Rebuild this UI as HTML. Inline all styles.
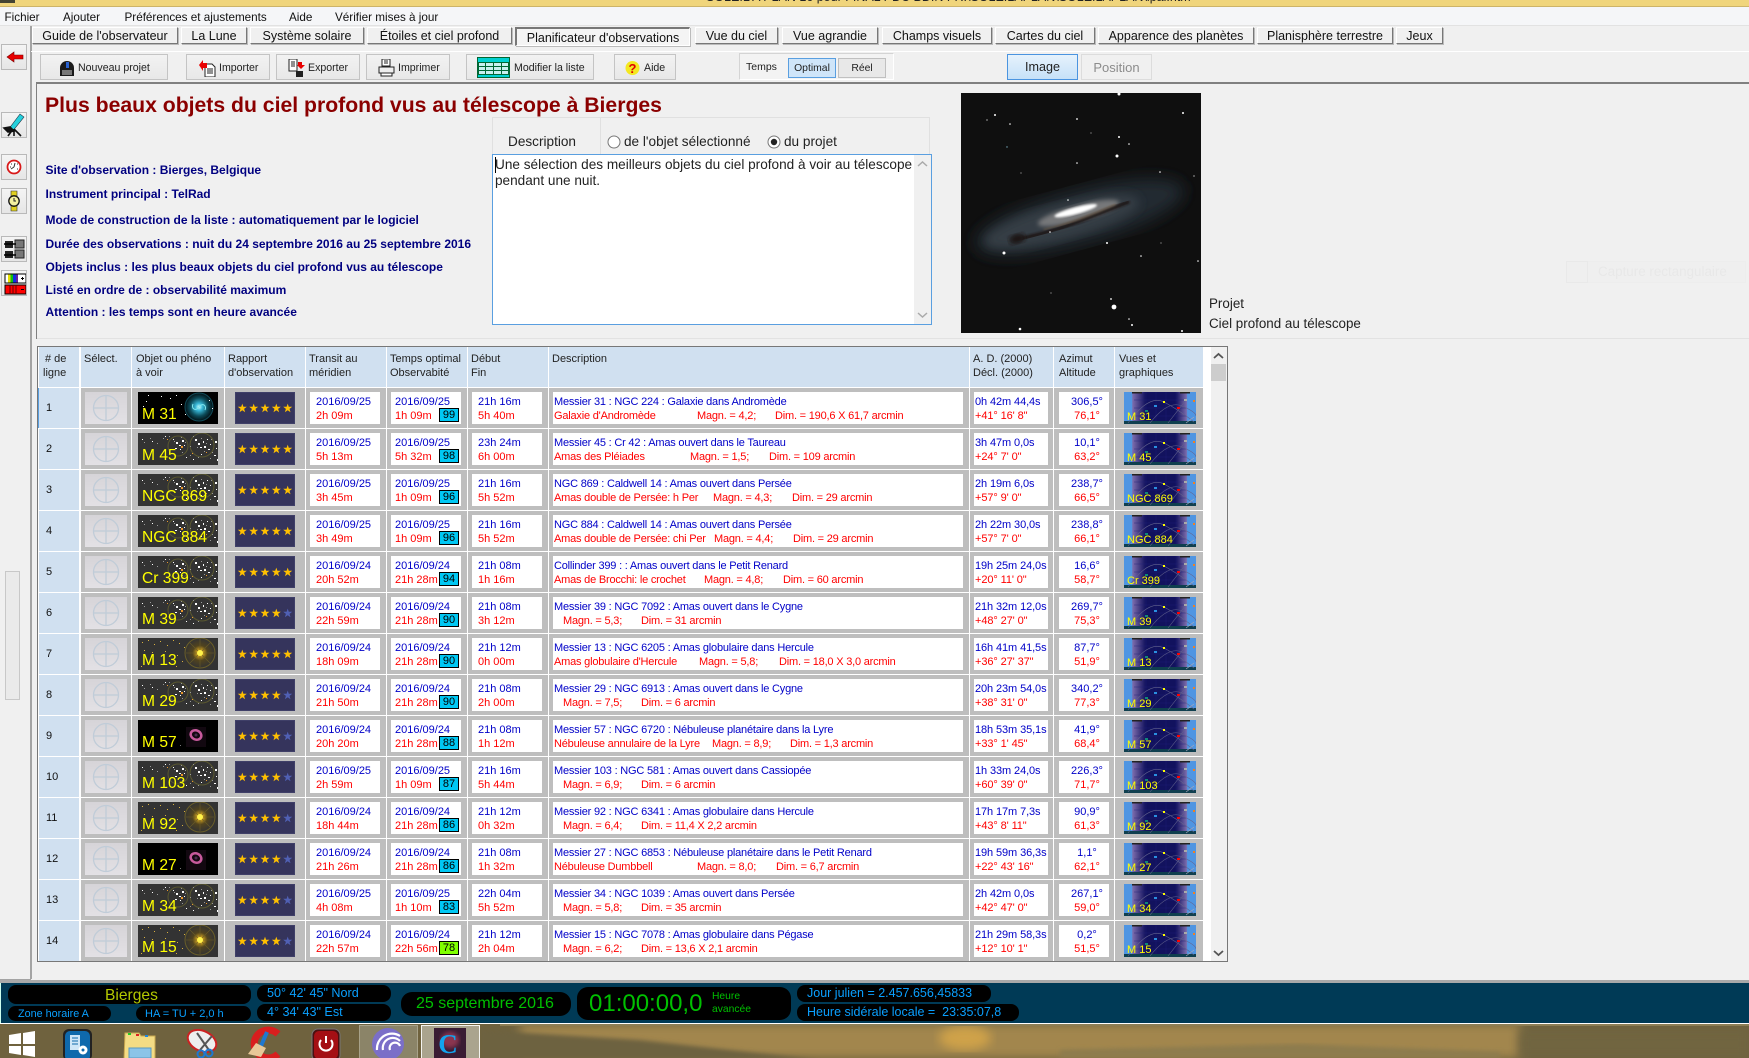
<!DOCTYPE html>
<html lang="fr"><head><meta charset="utf-8"><title>Planificateur d'observations</title>
<style>
*{box-sizing:border-box;margin:0;padding:0}
html,body{width:1749px;height:1058px;overflow:hidden;background:#f0f0f0;font-family:"Liberation Sans",sans-serif;font-size:11px;color:#111}
.a{position:absolute;white-space:nowrap}
.tab{position:absolute;top:27px;height:17px;background:#f0f0f0;border:1px solid;border-color:#fff #777 #777 #fff;font-size:12.5px;line-height:17px;text-align:center;box-shadow:1px 1px 0 #bbb}
.tab.on{height:19px;line-height:18px;border-color:#777 #fff #fff #777;border-width:2px 1px 1px 2px;background:#f4f4f4}
.btn{position:absolute;top:54px;height:26px;background:linear-gradient(#f2f2f2,#e8e8e8);border:1px solid #c4c4c4;font-size:10.6px;line-height:26px;color:#222}
.btn span{position:absolute;white-space:nowrap}
.btn svg{position:absolute}
.sb{position:absolute;left:1px;width:26px;height:26px;background:linear-gradient(#f4f4f4,#e6e6e6);border:1px solid #b9b9b9}
.inf{position:absolute;left:45.5px;font-weight:bold;font-size:12px;line-height:16px;color:#000080;white-space:nowrap}
.hd{position:absolute;top:347px;height:40px;background:#d0e0f0;padding-top:5px;line-height:14px;font-size:11px;color:#222;white-space:pre}
.r{position:absolute;left:0;width:1203px;height:40px;background:linear-gradient(90deg,transparent 0 39px,#d0e0f0 39px 79px,#fff 79px 81px,#bebebe 81px 131px,#fff 131px 132px,#bebebe 132px 224px,#fff 224px 225px,#bebebe 225px 305px,#fff 305px 306px,#bebebe 306px 386px,#fff 386px 387px,#bebebe 387px 467px,#fff 467px 468px,#bebebe 468px 548px,#fff 548px 549px,#bebebe 549px 969px,#fff 969px 970px,#bebebe 970px 1053px,#fff 1053px 1054px,#bebebe 1054px 1114px,#fff 1114px 1115px,#bebebe 1115px 1203px)}
.r>svg{position:absolute;top:4px}
.n{position:absolute;left:46px;top:13px;line-height:14px;color:#111}
.w{position:absolute;top:4px;height:32px;background:#fff;padding-top:3px;line-height:14px;white-space:nowrap}
.w b,.w i{display:block;font-weight:normal;font-style:normal;height:14px}
.w b{color:#0000c8}.w i{color:#f00}
.t5{left:310px;width:70px;padding-left:6px}
.t6{left:391px;width:70px;padding-left:4px}
.t7{left:472px;width:70px;padding-left:6px}
.d{left:553px;width:410px;padding-left:1px;letter-spacing:-.2px}
.ra{left:974px;width:74px;padding-left:1px;letter-spacing:-.1px}
.az{left:1059px;width:50px;padding-left:6px;text-align:center}
.m{position:absolute;top:17px;color:#f00}
.s{position:absolute;left:48px;top:16px;width:20px;height:14px;background:#00c8f4;border:1px solid #000;font-style:normal;color:#000;text-align:center;line-height:12px}
.l1{position:absolute;left:142px;top:18px;font-size:15.6px;line-height:18px;color:#ff0;white-space:nowrap}
.l2{position:absolute;left:1127px;top:22px;font-size:11px;line-height:14px;color:#ff0;white-space:nowrap}
.p{position:absolute;background:#000;border-radius:8px}
.bl{color:#0aa0ff;position:absolute;white-space:nowrap}
.gr{color:#00c000;position:absolute;white-space:nowrap}
</style></head><body>
<svg width="0" height="0" style="position:absolute">
<defs>
<radialGradient id="gm"><stop offset="0" stop-color="#cff"/><stop offset=".25" stop-color="#38b8d8"/><stop offset=".65" stop-color="#0c4a58"/><stop offset="1" stop-color="#021014"/></radialGradient>
<radialGradient id="gy"><stop offset="0" stop-color="#ffe838"/><stop offset=".2" stop-color="#c89c20"/><stop offset=".5" stop-color="#52441e"/><stop offset="1" stop-color="#333"/></radialGradient>
<linearGradient id="gv" x1="0" x2="1"><stop offset="0" stop-color="#4f95e2"/><stop offset=".11" stop-color="#4f95e2"/><stop offset=".12" stop-color="#7c6cac"/><stop offset=".3" stop-color="#12125e"/><stop offset=".72" stop-color="#12125e"/><stop offset=".87" stop-color="#7c6cac"/><stop offset=".88" stop-color="#4f95e2"/><stop offset="1" stop-color="#4f95e2"/></linearGradient>
<linearGradient id="gs" x1="0" y1="0" x2="0" y2="1"><stop offset="0" stop-color="#d6d4d8"/><stop offset="1" stop-color="#e3e1e5"/></linearGradient>
<filter id="b2"><feGaussianBlur stdDeviation="2"/></filter>
<filter id="b4"><feGaussianBlur stdDeviation="5"/></filter>
<filter id="b8"><feGaussianBlur stdDeviation="8"/></filter>
<filter id="b1"><feGaussianBlur stdDeviation="1"/></filter>
</defs>
<symbol id="sel" viewBox="0 0 42 32"><rect width="42" height="32" fill="url(#gs)"/><g fill="none" stroke="#c0ccd8" stroke-width="1.3"><circle cx="21" cy="16" r="12.5"/><path d="M21 3.500V28.500M8.500 16H33.500"/></g></symbol>
<symbol id="o" viewBox="0 0 80 32"><rect width="80" height="32" fill="#333"/><g fill="none" stroke="#5a5830"><circle cx="40" cy="13" r="10"/><circle cx="64" cy="12" r="12"/></g>
<path fill="#999" d="M6 9h1v1H6zM12 5h1v1h-1zM19 10h1v1h-1zM25 5h1v1h-1zM31 3h1v1h-1zM36 8h1v1h-1zM43 4h1v1h-1zM47 9h1v1h-1zM52 13h1v1h-1zM55 3h1v1h-1zM59 14h1v1h-1zM63 5h1v1h-1zM68 10h1v1h-1zM73 6h1v1h-1zM74 19h1v1h-1zM60 24h1v1h-1zM52 22h1v1h-1zM44 19h1v1h-1zM66 18h1v1h-1zM72 25h1v1h-1z"/>
<path fill="#fff" d="M4 6h1v1H4zM14 8h1v1h-1zM27 3h1v1h-1zM38 9h2v2h-2zM41 12h2v1h-2zM44 7h2v2h-2zM46 12h1v1h-1zM37 15h2v1h-2zM42 16h1v1h-1zM35 6h1v1h-1zM57 6h2v2h-2zM60 10h2v2h-2zM62 14h2v1h-2zM65 8h1v2h-1zM66 13h2v2h-2zM69 6h1v1h-1zM70 16h2v1h-2zM72 11h1v1h-1zM77 8h2v2h-2zM78 15h1v1h-1zM76 22h2v1h-2zM79 26h1v2h-1zM63 21h1v1h-1zM55 26h1v1h-1zM48 24h1v1h-1z"/>
<path fill="#e8962c" d="M43 13h2v2h-2zM54 20h1v1h-1zM29 6h1v1h-1zM68 19h1v1h-1z"/></symbol>
<symbol id="g" viewBox="0 0 80 32"><rect width="80" height="32" fill="#333"/><circle cx="62" cy="15" r="15" fill="url(#gy)"/><circle cx="62" cy="15" r="15" fill="none" stroke="#6a5e28"/><g stroke="#6a5c28" stroke-width=".6"><path d="M48 15h28M62 1v28M52 5l20 20M72 5L52 25"/></g><circle cx="62" cy="15" r="3" fill="#fff24a"/>
<path fill="#d8b040" d="M4 4h1v1H4zM10 2h1v1h-1zM16 6h1v1h-1zM22 3h1v1h-1zM29 7h1v1h-1zM35 2h1v1h-1zM41 5h1v1h-1zM6 12h1v1H6zM14 14h1v1h-1zM27 13h1v1h-1zM39 17h1v1h-1zM44 23h1v1h-1zM38 28h1v1h-1zM3 28h1v1H3zM46 9h1v1h-1z"/></symbol>
<symbol id="b" viewBox="0 0 80 32"><rect width="80" height="32" fill="#000"/><circle cx="61" cy="15" r="14" fill="url(#gm)"/><circle cx="61" cy="15" r="14" fill="none" stroke="#114a58"/><path d="M61 15c4-5 8-1 6 3M61 15c-4 5-8 1-6-3" fill="none" stroke="#7fe8f0"/><path fill="#fff" d="M10 3h1v1h-1zM23 4h1v1h-1zM32 6h1v1h-1zM5 14h1v1H5zM8 9h1v1H8zM47 22h1v1h-1zM43 12h1v1h-1zM38 3h1v1h-1zM74 16h1v1h-1zM71 8h1v1h-1z"/></symbol>
<symbol id="nb" viewBox="0 0 80 32"><rect width="80" height="32" fill="#000"/><rect x="48" y="7" width="20" height="20" fill="#120810"/><ellipse cx="58" cy="15" rx="5.500" ry="4.500" fill="none" stroke="#c75a9c" stroke-width="2.500" transform="rotate(25 58 15)"/><circle cx="58" cy="15" r="1.500" fill="#4a2a50"/><path fill="#777" d="M42 25h1v1h-1z"/></symbol>
<symbol id="st" viewBox="-5 -5 10 10"><polygon points="0,-4.700 1.100,-1.500 4.500,-1.500 1.800,.6 2.800,3.900 0,1.900 -2.800,3.900 -1.800,.6 -4.500,-1.500 -1.100,-1.500"/></symbol>
<symbol id="s5" viewBox="0 0 60 32"><rect width="60" height="32" fill="#35345c"/><rect x=".5" y=".5" width="59" height="31" fill="none" stroke="#3f3f68"/><g fill="#ffc000"><use href="#st" x="2.300" y="11.300" width="10" height="10"/><use href="#st" x="13.700" y="11.300" width="10" height="10"/><use href="#st" x="25" y="11.300" width="10" height="10"/><use href="#st" x="36.300" y="11.300" width="10" height="10"/><use href="#st" x="47.700" y="11.300" width="10" height="10"/></g></symbol>
<symbol id="s4" viewBox="0 0 60 32"><rect width="60" height="32" fill="#35345c"/><rect x=".5" y=".5" width="59" height="31" fill="none" stroke="#3f3f68"/><g fill="#ffc000"><use href="#st" x="2.300" y="11.300" width="10" height="10"/><use href="#st" x="13.700" y="11.300" width="10" height="10"/><use href="#st" x="25" y="11.300" width="10" height="10"/><use href="#st" x="36.300" y="11.300" width="10" height="10"/></g><use href="#st" x="47.700" y="11.300" width="10" height="10" fill="#5060b4"/></symbol>
<symbol id="v" viewBox="0 0 72 32"><rect width="72" height="32" fill="url(#gv)"/><path d="M8 0h10v1.500H8zM56 0h10v1.500H56z" fill="#222"/><rect y="29" width="72" height="3" fill="#0f3f4f"/><path stroke="#22227a" stroke-width=".4" d="M22 0v29M32 0v29M42 0v29M52 0v29M10 8h52M10 16h52M10 24h52"/><g fill="none" stroke="#62628c" stroke-width=".6"><path d="M4 31Q25 2 40 10T70 30"/><path d="M26 31Q44 8 58 14T72 24"/><path d="M44 31L62 8"/><path d="M62 31l8-6" stroke="#aab"/></g><rect x="39" y="9" width="2" height="2" fill="#ff0"/><rect x="53" y="15" width="3" height="2" fill="#f00"/><rect x="60" y="7" width="3" height="2" fill="#aaa"/><rect x="69" y="8" width="2" height="2" fill="#f08020"/><rect x="30" y="13" width="3" height="2" fill="#2a90e0"/><rect x="21" y="18" width="3" height="2" fill="#108878"/></symbol>
</svg>

<!-- title bar -->
<div class="a" style="left:0;top:0;width:1749px;height:7px;background:#f0d57c;border-bottom:1px solid #cdb469;overflow:hidden"><div class="a" style="left:0;top:0;width:15px;height:3px;background:#443"></div><div class="a" style="left:706px;top:-10px;font-size:12.5px;color:#222;line-height:14px">SOLEIL A PLAN 16 pour FINAL PDC BDIN FR:\SOLEILAPLAN\SOLEILAPLAN\ipal.htm</div></div>
<!-- menu -->
<div class="a" style="left:0;top:7px;width:1749px;height:19px;background:#f5f6f8;border-bottom:1px solid #e2e2e2;font-size:11.700px;line-height:21px;color:#111"><span class="a" style="left:4.500px">Fichier</span><span class="a" style="left:63px">Ajouter</span><span class="a" style="left:124.500px">Préférences et ajustements</span><span class="a" style="left:289px">Aide</span><span class="a" style="left:335px">Vérifier mises à jour</span></div>
<div class="a" style="left:30px;top:26px;width:1.500px;height:953px;background:#a4a4a4"></div>
<div class="a" style="left:0;top:979px;width:31px;height:1px;background:#a4a4a4"></div>
<div class="a" style="left:31px;top:51px;width:1718px;height:1px;background:#fff"></div>
<!-- tabs -->
<div class="tab" style="left:32px;width:146px">Guide de l'observateur</div>
<div class="tab" style="left:181px;width:66px">La Lune</div>
<div class="tab" style="left:250px;width:114px">Système solaire</div>
<div class="tab" style="left:367px;width:145px">Étoiles et ciel profond</div>
<div class="tab on" style="left:515px;width:175px">Planificateur d'observations</div>
<div class="tab" style="left:695px;width:83px">Vue du ciel</div>
<div class="tab" style="left:782px;width:96px">Vue agrandie</div>
<div class="tab" style="left:882px;width:110px">Champs visuels</div>
<div class="tab" style="left:995px;width:100px">Cartes du ciel</div>
<div class="tab" style="left:1098px;width:156px">Apparence des planètes</div>
<div class="tab" style="left:1257px;width:136px">Planisphère terrestre</div>
<div class="tab" style="left:1396px;width:47px">Jeux</div>
<!-- toolbar -->
<div class="btn" style="left:40px;width:128px"><svg style="left:17px;top:5px" width="18" height="16" viewBox="0 0 18 16"><path d="M2 16V8a7 7 0 0 1 14 0v8z" fill="#1a1a1a"/><path d="M8 2h3v6H8z" fill="#2a62d0"/><rect x="4" y="10" width="10" height="5" fill="#777"/></svg><span style="left:37px">Nouveau projet</span></div>
<div class="btn" style="left:186px;width:84px"><svg style="left:12px;top:5px" width="17" height="17" viewBox="0 0 17 17"><path d="M6 4h7l3 3v10H6z" fill="#fff" stroke="#222"/><path d="M8 9h6M8 11h6M8 13h6" stroke="#222"/><path d="M0 5l4-5v3h4v5H4v3z" fill="#e80000"/></svg><span style="left:32px">Importer</span></div>
<div class="btn" style="left:276px;width:84px"><svg style="left:11px;top:4px" width="18" height="18" viewBox="0 0 18 18"><path d="M1 0h8v12H1z" fill="#fff" stroke="#222"/><path d="M3 3h4M3 5h4M3 7h4" stroke="#222"/><rect x="8" y="12" width="7" height="6" fill="#222"/><path d="M10 3h4v3h3l-4 4-4-4h1z" fill="#e80000"/></svg><span style="left:31px">Exporter</span></div>
<div class="btn" style="left:366px;width:84px"><svg style="left:11px;top:4px" width="17" height="18" viewBox="0 0 17 18"><path d="M4 0h8v7H4z" fill="#fff" stroke="#222"/><path d="M6 2h4M6 4h4" stroke="#222"/><path d="M1 8h15v6H1z" fill="#eee" stroke="#222"/><path d="M3 14h11v3H3z" fill="#fff" stroke="#222"/></svg><span style="left:31px">Imprimer</span></div>
<div class="btn" style="left:466px;width:128px"><svg style="left:10px;top:2px" width="33" height="21" viewBox="0 0 33 21"><rect width="33" height="21" fill="#063"/><rect x="1" y="1" width="31" height="4" fill="#00d0d0"/><g fill="#c8f0f0"><path d="M2 6h6v3H2zM9 6h7v3H9zM17 6h7v3h-7zM25 6h6v3h-6zM2 10h6v3H2zM9 10h7v3H9zM17 10h7v3h-7zM25 10h6v3h-6zM2 14h6v3H2zM9 14h7v3H9zM17 14h7v3h-7zM25 14h6v3h-6z"/></g><rect x="1" y="18" width="31" height="2" fill="#00d0d0"/></svg><span style="left:47px">Modifier la liste</span></div>
<div class="btn" style="left:614px;width:62px"><svg style="left:10px;top:5px" width="15" height="16" viewBox="0 0 15 16"><circle cx="7.500" cy="8" r="7" fill="#f4e820"/><text x="7.500" y="13" text-anchor="middle" font-family="Liberation Sans" font-weight="bold" font-size="13" fill="#e00000">?</text></svg><span style="left:29px">Aide</span></div>
<div class="a" style="left:739px;top:53px;width:155px;height:27px;border:1px solid;border-color:#d4d4d4 #fff #fff #d4d4d4;background:#f3f3f3"></div>
<div class="a" style="left:746px;top:59px;font-size:10.500px;line-height:16px;color:#222">Temps</div>
<div class="a" style="left:788px;top:58px;width:48px;height:20px;background:#cfe5f9;border:1px solid #5a9fe0;font-size:10.400px;line-height:20px;text-align:center;color:#222">Optimal</div>
<div class="a" style="left:838px;top:58px;width:48px;height:20px;background:#e8e8e8;border:1px solid #c0c0c0;font-size:10.400px;line-height:20px;text-align:center;color:#222">Réel</div>
<div class="a" style="left:1007px;top:54px;width:71px;height:26px;background:linear-gradient(#e6f2fc,#c6e1f8);border:1px solid #4a94e0;font-size:12.600px;line-height:25px;text-align:center;color:#222">Image</div>
<div class="a" style="left:1081px;top:54px;width:71px;height:26px;background:#f0f0f0;border:1px solid #dcdcdc;font-size:13px;line-height:25px;text-align:center;color:#8c8c8c">Position</div>
<div class="a" style="left:36px;top:82px;width:1713px;height:2px;background:#808080"></div>
<div class="a" style="left:35.500px;top:83px;width:1.500px;height:256px;background:#808080"></div>
<div class="a" style="left:37px;top:338px;width:1712px;height:1px;background:#e2e2e2"></div>
<!-- sidebar -->
<div class="sb" style="top:44px"><svg width="24" height="24" viewBox="0 0 24 24"><path d="M5 12l7-5v3h9v4h-9v3z" fill="#e80000" stroke="#700" stroke-width=".6"/></svg></div>
<div class="sb" style="top:112px"><svg width="24" height="24" viewBox="0 0 24 24"><path d="M6 17L18 1l4 3-12 15z" fill="#25d0dc" stroke="#234" stroke-width=".6"/><path d="M2 15l6-1 4 4-6 1zM11 16l-5 7M12 16l0 7M12 16l7 7" stroke="#111" stroke-width="1.600" fill="#111"/></svg></div>
<div class="sb" style="top:154px"><svg width="24" height="24" viewBox="0 0 24 24"><circle cx="12" cy="12" r="6.500" fill="#fff" stroke="#d81818" stroke-width="1.800"/><path d="M12 12l-3 2M12 12l1-4M9 9h1M15 9h1M8 12h1M15 14h1" stroke="#333"/></svg></div>
<div class="sb" style="top:188px"><svg width="24" height="24" viewBox="0 0 24 24"><path d="M9 2h6v5H9zM9 16h6v6H9z" fill="#e0d020" stroke="#333" stroke-width=".6"/><circle cx="12" cy="12" r="5.200" fill="#f4f0a0" stroke="#111" stroke-width="1.300"/><path d="M12 9v3h2" stroke="#222" fill="none"/></svg></div>
<div class="sb" style="top:236px"><svg width="24" height="24" viewBox="0 0 24 24"><path d="M3 4h8v7H3zM3 14h8v7H3z" fill="#222"/><path d="M13 3h9v8h-9zM13 13h9v8h-9z" fill="#777" stroke="#222"/><path d="M2 7h12M2 18h12" stroke="#000" stroke-width="1.400"/></svg></div>
<div class="sb" style="top:270px"><svg width="24" height="24" viewBox="0 0 24 24"><rect x="3" y="3" width="21" height="9" fill="#fff" stroke="#000"/><path d="M6 3.500h2.500v8H6z" fill="#e8e000"/><path d="M8.500 3.500H11v8H8.500z" fill="#10c010"/><path d="M11 3.500h3v8h-3z" fill="#1030e0"/><path d="M14 3.500h2v8h-2z" fill="#6020a0"/><path d="M19 7.500h3M20.500 6v3" stroke="#000"/><rect x="3" y="14" width="21" height="9" fill="#f00" stroke="#000"/><path d="M8 14v9M11 14v9M14 14v9" stroke="#600"/><path d="M19 18.500h3" stroke="#000"/></svg></div>
<div class="a" style="left:5px;top:571px;width:15px;height:129px;background:#eaeaea;border:1px solid #c8c8c8"></div>
<!-- heading -->
<div class="a" style="left:45px;top:93px;font-size:21.200px;line-height:26px;font-weight:bold;color:#8b0000">Plus beaux objets du ciel profond vus au télescope à Bierges</div>
<div class="inf" style="top:162px">Site d'observation : Bierges, Belgique</div>
<div class="inf" style="top:186px">Instrument principal : TelRad</div>
<div class="inf" style="top:212px">Mode de construction de la liste : automatiquement par le logiciel</div>
<div class="inf" style="top:236px">Durée des observations : nuit du 24 septembre 2016 au 25 septembre 2016</div>
<div class="inf" style="top:259px">Objets inclus : les plus beaux objets du ciel profond vus au télescope</div>
<div class="inf" style="top:282px">Listé en ordre de : observabilité maximum</div>
<div class="inf" style="top:304px">Attention : les temps sont en heure avancée</div>
<!-- description -->
<div class="a" style="left:492px;top:117px;width:438px;height:38px;border:1px solid #e0e0e0;background:#f0f0f0"></div>
<div class="a" style="left:600px;top:117px;width:1px;height:38px;background:#e0e0e0"></div>
<div class="a" style="left:508px;top:134px;font-size:13.600px;line-height:16px;color:#222">Description</div>
<svg class="a" style="left:607px;top:135px" width="14" height="14"><circle cx="7" cy="7" r="6" fill="#fff" stroke="#777"/></svg>
<div class="a" style="left:624px;top:134px;font-size:13.600px;line-height:16px;color:#222">de l'objet sélectionné</div>
<svg class="a" style="left:767px;top:135px" width="14" height="14"><circle cx="7" cy="7" r="6" fill="#fff" stroke="#777"/><circle cx="7" cy="7" r="3.200" fill="#222"/></svg>
<div class="a" style="left:784px;top:134px;font-size:13.600px;line-height:16px;color:#222">du projet</div>
<div class="a" style="left:492px;top:154px;width:440px;height:171px;background:#fff;border:1px solid #5a9fe0"></div>
<div class="a" style="left:495px;top:157px;font-size:13.600px;line-height:16px;color:#222">Une sélection des meilleurs objets du ciel profond à voir au télescope<br>pendant une nuit.</div>
<div class="a" style="left:495px;top:157px;width:1px;height:16px;background:#000"></div>
<div class="a" style="left:914px;top:155px;width:17px;height:169px;background:#f0f0f0"></div>
<svg class="a" style="left:917px;top:160px" width="11" height="8"><path d="M1 6l4.500-4L10 6" fill="none" stroke="#aaa" stroke-width="1.500"/></svg>
<svg class="a" style="left:917px;top:311px" width="11" height="8"><path d="M1 2l4.500 4L10 2" fill="none" stroke="#aaa" stroke-width="1.500"/></svg>
<!-- galaxy -->
<svg class="a" style="left:961px;top:93px" width="240" height="240" viewBox="0 0 240 240"><rect width="240" height="240" fill="#0f0f0f"/>
<g transform="rotate(-15 118 122)"><ellipse cx="118" cy="124" rx="108" ry="27" fill="#232b33" filter="url(#b8)"/><ellipse cx="100" cy="124" rx="80" ry="18" fill="#363d45" filter="url(#b4)"/><ellipse cx="118" cy="120" rx="42" ry="8" fill="#77787a" filter="url(#b2)"/><ellipse cx="116" cy="117" rx="22" ry="3.500" fill="#fff" filter="url(#b1)"/><path d="M50 129C85 133 120 128 170 122" fill="none" stroke="#1c1712" stroke-width="3.500" filter="url(#b1)"/><path d="M80 127C105 128 132 125 156 121" fill="none" stroke="#6e5c46" stroke-width="1.200" filter="url(#b1)"/><ellipse cx="52" cy="129" rx="8" ry="5" fill="#1a1613" filter="url(#b2)"/></g>
<g fill="#fff"><circle cx="158" cy="1" r="1.500"/><circle cx="34" cy="22" r="1"/><circle cx="116" cy="26" r=".9"/><circle cx="49" cy="31" r=".8"/><circle cx="222" cy="20" r="1"/><circle cx="158" cy="44" r="1"/><circle cx="168" cy="51" r=".8"/><circle cx="156" cy="63" r="1.500"/><circle cx="116" cy="70" r=".8"/><circle cx="199" cy="79" r=".8"/><circle cx="107" cy="107" r=".8"/><circle cx="43" cy="160" r="1.500"/><circle cx="146" cy="150" r="1"/><circle cx="180" cy="163" r=".8"/><circle cx="153" cy="214" r="2.400"/><circle cx="150" cy="206" r=".9"/><circle cx="171" cy="232" r="1"/><circle cx="59" cy="236" r="1.300"/><circle cx="221" cy="238" r="1"/><circle cx="168" cy="226" r=".8"/><circle cx="89" cy="139" r=".8"/><circle cx="237" cy="168" r=".8"/><circle cx="233" cy="83" r=".6"/><circle cx="46" cy="54" r=".7" fill="#7ab"/><circle cx="26" cy="27" r=".6"/><circle cx="60" cy="80" r=".5"/><circle cx="130" cy="40" r=".5"/><circle cx="200" cy="150" r=".5"/><circle cx="90" cy="200" r=".5"/></g></svg>
<div class="a" style="left:1209px;top:296px;font-size:13.400px;line-height:16px;color:#222">Projet</div>
<div class="a" style="left:1209px;top:316px;font-size:13.400px;line-height:16px;color:#222">Ciel profond au télescope</div>
<div class="a" style="left:1566px;top:261px;width:180px;height:22px;background:#efefef;border:1px solid #ededed"></div>
<div class="a" style="left:1566px;top:261px;width:22px;height:22px;border:1px solid #e9e9e9"></div>
<div class="a" style="left:1598px;top:264px;font-size:13.400px;line-height:16px;color:#e8e8e8">Capture rectangulaire</div>

<!-- table -->
<div class="a" style="left:37px;top:346px;width:1191px;height:616px;background:#fff;border:1px solid #777;border-top-width:1px"></div>
<div class="a" style="left:1211px;top:347px;width:16px;height:614px;background:#f0f0f0"></div>
<div class="a" style="left:1211px;top:364px;width:15px;height:17px;background:#cdcdcd"></div>
<svg class="a" style="left:1213px;top:352px" width="11" height="8"><path d="M1 6l4.500-4L10 6" fill="none" stroke="#555" stroke-width="1.800"/></svg>
<svg class="a" style="left:1213px;top:949px" width="11" height="8"><path d="M1 2l4.500 4L10 2" fill="none" stroke="#555" stroke-width="1.800"/></svg>
<div class="hd" style="left:39px;width:40px;padding-left:4px"><span style="margin-left:2px"># de</span>
ligne</div>
<div class="hd" style="left:81px;width:50px;padding-left:3px">Sélect.</div>
<div class="hd" style="left:132px;width:92px;padding-left:4px">Objet ou phéno
à voir</div>
<div class="hd" style="left:225px;width:80px;padding-left:3px">Rapport
d'observation</div>
<div class="hd" style="left:306px;width:80px;padding-left:3px">Transit au
méridien</div>
<div class="hd" style="left:387px;width:80px;padding-left:3px">Temps optimal
Observabité</div>
<div class="hd" style="left:468px;width:80px;padding-left:3px">Début
Fin</div>
<div class="hd" style="left:549px;width:420px;padding-left:3px">Description</div>
<div class="hd" style="left:970px;width:83px;padding-left:3px">A. D. (2000)
Décl. (2000)</div>
<div class="hd" style="left:1054px;width:60px;padding-left:5px">Azimut
Altitude</div>
<div class="hd" style="left:1115px;width:88px;padding-left:4px">Vues et
graphiques</div>
<div class="a" style="left:38px;top:388px;width:1px;height:40px;background:#5a9fe0;z-index:2"></div>

<div class="r" style="top:388px"><div class="n">1</div><svg style="left:85px" width="42" height="32"><use href="#sel"/></svg><svg style="left:138px" width="80" height="32"><use href="#b"/></svg><div class="l1">M 31</div><svg style="left:235px" width="60" height="32"><use href="#s5"/></svg><div class="w t5"><b>2016/09/25</b><i>2h 09m</i></div><div class="w t6"><b>2016/09/25</b><i>1h 09m</i><em class="s">99</em></div><div class="w t7"><b>21h 16m</b><i>5h 40m</i></div><div class="w d"><b>Messier 31 : NGC 224 : Galaxie dans Andromède</b><i>Galaxie d'Andromède</i><span class="m" style="left:144px">Magn. = 4,2;</span><span class="m" style="left:222px">Dim. = 190,6 X 61,7 arcmin</span></div><div class="w ra"><b>0h 42m 44,4s</b><i>+41° 16' 8"</i></div><div class="w az"><b>306,5°</b><i>76,1°</i></div><svg style="left:1124px" width="72" height="32"><use href="#v"/></svg><div class="l2">M 31</div></div>

<div class="r" style="top:429px"><div class="n">2</div><svg style="left:85px" width="42" height="32"><use href="#sel"/></svg><svg style="left:138px" width="80" height="32"><use href="#o"/></svg><div class="l1">M 45</div><svg style="left:235px" width="60" height="32"><use href="#s5"/></svg><div class="w t5"><b>2016/09/25</b><i>5h 13m</i></div><div class="w t6"><b>2016/09/25</b><i>5h 32m</i><em class="s">98</em></div><div class="w t7"><b>23h 24m</b><i>6h 00m</i></div><div class="w d"><b>Messier 45 : Cr 42 : Amas ouvert dans le Taureau</b><i>Amas des Pléiades</i><span class="m" style="left:137px">Magn. = 1,5;</span><span class="m" style="left:216px">Dim. = 109 arcmin</span></div><div class="w ra"><b>3h 47m 0,0s</b><i>+24° 7' 0"</i></div><div class="w az"><b>10,1°</b><i>63,2°</i></div><svg style="left:1124px" width="72" height="32"><use href="#v"/></svg><div class="l2">M 45</div></div>

<div class="r" style="top:470px"><div class="n">3</div><svg style="left:85px" width="42" height="32"><use href="#sel"/></svg><svg style="left:138px" width="80" height="32"><use href="#o"/></svg><div class="l1">NGC 869</div><svg style="left:235px" width="60" height="32"><use href="#s5"/></svg><div class="w t5"><b>2016/09/25</b><i>3h 45m</i></div><div class="w t6"><b>2016/09/25</b><i>1h 09m</i><em class="s">96</em></div><div class="w t7"><b>21h 16m</b><i>5h 52m</i></div><div class="w d"><b>NGC 869 : Caldwell 14 : Amas ouvert dans Persée</b><i>Amas double de Persée: h Per</i><span class="m" style="left:160px">Magn. = 4,3;</span><span class="m" style="left:239px">Dim. = 29 arcmin</span></div><div class="w ra"><b>2h 19m 6,0s</b><i>+57° 9' 0"</i></div><div class="w az"><b>238,7°</b><i>66,5°</i></div><svg style="left:1124px" width="72" height="32"><use href="#v"/></svg><div class="l2">NGC 869</div></div>

<div class="r" style="top:511px"><div class="n">4</div><svg style="left:85px" width="42" height="32"><use href="#sel"/></svg><svg style="left:138px" width="80" height="32"><use href="#o"/></svg><div class="l1">NGC 884</div><svg style="left:235px" width="60" height="32"><use href="#s5"/></svg><div class="w t5"><b>2016/09/25</b><i>3h 49m</i></div><div class="w t6"><b>2016/09/25</b><i>1h 09m</i><em class="s">96</em></div><div class="w t7"><b>21h 16m</b><i>5h 52m</i></div><div class="w d"><b>NGC 884 : Caldwell 14 : Amas ouvert dans Persée</b><i>Amas double de Persée: chi Per</i><span class="m" style="left:161px">Magn. = 4,4;</span><span class="m" style="left:240px">Dim. = 29 arcmin</span></div><div class="w ra"><b>2h 22m 30,0s</b><i>+57° 7' 0"</i></div><div class="w az"><b>238,8°</b><i>66,1°</i></div><svg style="left:1124px" width="72" height="32"><use href="#v"/></svg><div class="l2">NGC 884</div></div>

<div class="r" style="top:552px"><div class="n">5</div><svg style="left:85px" width="42" height="32"><use href="#sel"/></svg><svg style="left:138px" width="80" height="32"><use href="#o"/></svg><div class="l1">Cr 399</div><svg style="left:235px" width="60" height="32"><use href="#s5"/></svg><div class="w t5"><b>2016/09/24</b><i>20h 52m</i></div><div class="w t6"><b>2016/09/24</b><i>21h 28m</i><em class="s">94</em></div><div class="w t7"><b>21h 08m</b><i>1h 16m</i></div><div class="w d"><b>Collinder 399 : : Amas ouvert dans le Petit Renard</b><i>Amas de Brocchi: le crochet</i><span class="m" style="left:151px">Magn. = 4,8;</span><span class="m" style="left:230px">Dim. = 60 arcmin</span></div><div class="w ra"><b>19h 25m 24,0s</b><i>+20° 11' 0"</i></div><div class="w az"><b>16,6°</b><i>58,7°</i></div><svg style="left:1124px" width="72" height="32"><use href="#v"/></svg><div class="l2">Cr 399</div></div>

<div class="r" style="top:593px"><div class="n">6</div><svg style="left:85px" width="42" height="32"><use href="#sel"/></svg><svg style="left:138px" width="80" height="32"><use href="#o"/></svg><div class="l1">M 39</div><svg style="left:235px" width="60" height="32"><use href="#s4"/></svg><div class="w t5"><b>2016/09/24</b><i>22h 59m</i></div><div class="w t6"><b>2016/09/24</b><i>21h 28m</i><em class="s">90</em></div><div class="w t7"><b>21h 08m</b><i>3h 12m</i></div><div class="w d"><b>Messier 39 : NGC 7092 : Amas ouvert dans le Cygne</b><i></i><span class="m" style="left:10px">Magn. = 5,3;</span><span class="m" style="left:88px">Dim. = 31 arcmin</span></div><div class="w ra"><b>21h 32m 12,0s</b><i>+48° 27' 0"</i></div><div class="w az"><b>269,7°</b><i>75,3°</i></div><svg style="left:1124px" width="72" height="32"><use href="#v"/></svg><div class="l2">M 39</div></div>

<div class="r" style="top:634px"><div class="n">7</div><svg style="left:85px" width="42" height="32"><use href="#sel"/></svg><svg style="left:138px" width="80" height="32"><use href="#g"/></svg><div class="l1">M 13</div><svg style="left:235px" width="60" height="32"><use href="#s5"/></svg><div class="w t5"><b>2016/09/24</b><i>18h 09m</i></div><div class="w t6"><b>2016/09/24</b><i>21h 28m</i><em class="s">90</em></div><div class="w t7"><b>21h 12m</b><i>0h 00m</i></div><div class="w d"><b>Messier 13 : NGC 6205 : Amas globulaire dans Hercule</b><i>Amas globulaire d'Hercule</i><span class="m" style="left:146px">Magn. = 5,8;</span><span class="m" style="left:226px">Dim. = 18,0 X 3,0 arcmin</span></div><div class="w ra"><b>16h 41m 41,5s</b><i>+36° 27' 37"</i></div><div class="w az"><b>87,7°</b><i>51,9°</i></div><svg style="left:1124px" width="72" height="32"><use href="#v"/></svg><div class="l2">M 13</div></div>

<div class="r" style="top:675px"><div class="n">8</div><svg style="left:85px" width="42" height="32"><use href="#sel"/></svg><svg style="left:138px" width="80" height="32"><use href="#o"/></svg><div class="l1">M 29</div><svg style="left:235px" width="60" height="32"><use href="#s4"/></svg><div class="w t5"><b>2016/09/24</b><i>21h 50m</i></div><div class="w t6"><b>2016/09/24</b><i>21h 28m</i><em class="s">90</em></div><div class="w t7"><b>21h 08m</b><i>2h 00m</i></div><div class="w d"><b>Messier 29 : NGC 6913 : Amas ouvert dans le Cygne</b><i></i><span class="m" style="left:10px">Magn. = 7,5;</span><span class="m" style="left:88px">Dim. = 6 arcmin</span></div><div class="w ra"><b>20h 23m 54,0s</b><i>+38° 31' 0"</i></div><div class="w az"><b>340,2°</b><i>77,3°</i></div><svg style="left:1124px" width="72" height="32"><use href="#v"/></svg><div class="l2">M 29</div></div>

<div class="r" style="top:716px"><div class="n">9</div><svg style="left:85px" width="42" height="32"><use href="#sel"/></svg><svg style="left:138px" width="80" height="32"><use href="#nb"/></svg><div class="l1">M 57</div><svg style="left:235px" width="60" height="32"><use href="#s4"/></svg><div class="w t5"><b>2016/09/24</b><i>20h 20m</i></div><div class="w t6"><b>2016/09/24</b><i>21h 28m</i><em class="s">88</em></div><div class="w t7"><b>21h 08m</b><i>1h 12m</i></div><div class="w d"><b>Messier 57 : NGC 6720 : Nébuleuse planétaire dans la Lyre</b><i>Nébuleuse annulaire de la Lyre</i><span class="m" style="left:159px">Magn. = 8,9;</span><span class="m" style="left:237px">Dim. = 1,3 arcmin</span></div><div class="w ra"><b>18h 53m 35,1s</b><i>+33° 1' 45"</i></div><div class="w az"><b>41,9°</b><i>68,4°</i></div><svg style="left:1124px" width="72" height="32"><use href="#v"/></svg><div class="l2">M 57</div></div>

<div class="r" style="top:757px"><div class="n">10</div><svg style="left:85px" width="42" height="32"><use href="#sel"/></svg><svg style="left:138px" width="80" height="32"><use href="#o"/></svg><div class="l1">M 103</div><svg style="left:235px" width="60" height="32"><use href="#s4"/></svg><div class="w t5"><b>2016/09/25</b><i>2h 59m</i></div><div class="w t6"><b>2016/09/25</b><i>1h 09m</i><em class="s">87</em></div><div class="w t7"><b>21h 16m</b><i>5h 44m</i></div><div class="w d"><b>Messier 103 : NGC 581 : Amas ouvert dans Cassiopée</b><i></i><span class="m" style="left:10px">Magn. = 6,9;</span><span class="m" style="left:88px">Dim. = 6 arcmin</span></div><div class="w ra"><b>1h 33m 24,0s</b><i>+60° 39' 0"</i></div><div class="w az"><b>226,3°</b><i>71,7°</i></div><svg style="left:1124px" width="72" height="32"><use href="#v"/></svg><div class="l2">M 103</div></div>

<div class="r" style="top:798px"><div class="n">11</div><svg style="left:85px" width="42" height="32"><use href="#sel"/></svg><svg style="left:138px" width="80" height="32"><use href="#g"/></svg><div class="l1">M 92</div><svg style="left:235px" width="60" height="32"><use href="#s4"/></svg><div class="w t5"><b>2016/09/24</b><i>18h 44m</i></div><div class="w t6"><b>2016/09/24</b><i>21h 28m</i><em class="s">86</em></div><div class="w t7"><b>21h 12m</b><i>0h 32m</i></div><div class="w d"><b>Messier 92 : NGC 6341 : Amas globulaire dans Hercule</b><i></i><span class="m" style="left:10px">Magn. = 6,4;</span><span class="m" style="left:88px">Dim. = 11,4 X 2,2 arcmin</span></div><div class="w ra"><b>17h 17m 7,3s</b><i>+43° 8' 11"</i></div><div class="w az"><b>90,9°</b><i>61,3°</i></div><svg style="left:1124px" width="72" height="32"><use href="#v"/></svg><div class="l2">M 92</div></div>

<div class="r" style="top:839px"><div class="n">12</div><svg style="left:85px" width="42" height="32"><use href="#sel"/></svg><svg style="left:138px" width="80" height="32"><use href="#nb"/></svg><div class="l1">M 27</div><svg style="left:235px" width="60" height="32"><use href="#s4"/></svg><div class="w t5"><b>2016/09/24</b><i>21h 26m</i></div><div class="w t6"><b>2016/09/24</b><i>21h 28m</i><em class="s">86</em></div><div class="w t7"><b>21h 08m</b><i>1h 32m</i></div><div class="w d"><b>Messier 27 : NGC 6853 : Nébuleuse planétaire dans le Petit Renard</b><i>Nébuleuse Dumbbell</i><span class="m" style="left:144px">Magn. = 8,0;</span><span class="m" style="left:223px">Dim. = 6,7 arcmin</span></div><div class="w ra"><b>19h 59m 36,3s</b><i>+22° 43' 16"</i></div><div class="w az"><b>1,1°</b><i>62,1°</i></div><svg style="left:1124px" width="72" height="32"><use href="#v"/></svg><div class="l2">M 27</div></div>

<div class="r" style="top:880px"><div class="n">13</div><svg style="left:85px" width="42" height="32"><use href="#sel"/></svg><svg style="left:138px" width="80" height="32"><use href="#o"/></svg><div class="l1">M 34</div><svg style="left:235px" width="60" height="32"><use href="#s4"/></svg><div class="w t5"><b>2016/09/25</b><i>4h 08m</i></div><div class="w t6"><b>2016/09/25</b><i>1h 10m</i><em class="s">83</em></div><div class="w t7"><b>22h 04m</b><i>5h 52m</i></div><div class="w d"><b>Messier 34 : NGC 1039 : Amas ouvert dans Persée</b><i></i><span class="m" style="left:10px">Magn. = 5,8;</span><span class="m" style="left:88px">Dim. = 35 arcmin</span></div><div class="w ra"><b>2h 42m 0,0s</b><i>+42° 47' 0"</i></div><div class="w az"><b>267,1°</b><i>59,0°</i></div><svg style="left:1124px" width="72" height="32"><use href="#v"/></svg><div class="l2">M 34</div></div>

<div class="r" style="top:921px"><div class="n">14</div><svg style="left:85px" width="42" height="32"><use href="#sel"/></svg><svg style="left:138px" width="80" height="32"><use href="#g"/></svg><div class="l1">M 15</div><svg style="left:235px" width="60" height="32"><use href="#s4"/></svg><div class="w t5"><b>2016/09/24</b><i>22h 57m</i></div><div class="w t6"><b>2016/09/24</b><i>22h 56m</i><em class="s" style="background:#80ff00">78</em></div><div class="w t7"><b>21h 12m</b><i>2h 04m</i></div><div class="w d"><b>Messier 15 : NGC 7078 : Amas globulaire dans Pégase</b><i></i><span class="m" style="left:10px">Magn. = 6,2;</span><span class="m" style="left:88px">Dim. = 13,6 X 2,1 arcmin</span></div><div class="w ra"><b>21h 29m 58,3s</b><i>+12° 10' 1"</i></div><div class="w az"><b>0,2°</b><i>51,5°</i></div><svg style="left:1124px" width="72" height="32"><use href="#v"/></svg><div class="l2">M 15</div></div>

<!-- status bar -->
<div class="a" style="left:0;top:980px;width:1749px;height:3px;background:#a9a9a9"></div>
<div class="a" style="left:0;top:983px;width:1749px;height:40px;background:#003a56;border-left:1px solid #cfe"></div>
<div class="p" style="left:8px;top:985px;width:243px;height:19px"></div>
<div class="a" style="left:105px;top:986px;font-size:15.600px;line-height:20px;color:#b4c800">Bierges</div>
<div class="p" style="left:8px;top:1006px;width:103px;height:15px"></div>
<div class="bl" style="left:18px;top:1006px;font-size:10.800px;line-height:16px">Zone horaire A</div>
<div class="p" style="left:136px;top:1006px;width:115px;height:15px"></div>
<div class="bl" style="left:145px;top:1006px;font-size:11px;line-height:16px">HA = TU + 2,0 h</div>
<div class="p" style="left:257px;top:985px;width:134px;height:17px"></div>
<div class="bl" style="left:267px;top:985px;font-size:12.600px;line-height:17px">50° 42' 45" Nord</div>
<div class="p" style="left:257px;top:1004px;width:134px;height:17px"></div>
<div class="bl" style="left:267px;top:1004px;font-size:12.600px;line-height:17px">4° 34' 43" Est</div>
<div class="p" style="left:401px;top:992px;width:170px;height:24px;border-radius:11px"></div>
<div class="gr" style="left:416px;top:994px;font-size:16px;line-height:20px">25 septembre 2016</div>
<div class="p" style="left:577px;top:987px;width:214px;height:33px;border-radius:11px"></div>
<div class="gr" style="left:589px;top:990px;font-size:24px;line-height:28px">01:00:00,0</div>
<div class="gr" style="left:712px;top:990px;font-size:10.300px;line-height:14px">Heure</div>
<div class="gr" style="left:712px;top:1003px;font-size:10.300px;line-height:14px">avancée</div>
<div class="p" style="left:797px;top:985px;width:194px;height:17px"></div>
<div class="bl" style="left:807px;top:985px;font-size:12.500px;line-height:17px">Jour julien = 2.457.656,45833</div>
<div class="p" style="left:797px;top:1004px;width:222px;height:17px"></div>
<div class="bl" style="left:807px;top:1004px;font-size:12.500px;line-height:17px">Heure sidérale locale = &nbsp;23:35:07,8</div>
<div class="a" style="left:0;top:1023px;width:1749px;height:1px;background:#fff"></div>

<!-- taskbar -->
<svg class="a" style="left:0;top:1024px" width="1749" height="34" viewBox="0 1024 1749 34">
<rect y="1024" width="1749" height="34" fill="#6f623e"/>
<rect x="520" y="1024" width="1000" height="34" fill="#a2864e" filter="url(#b4)"/>
<path d="M480 1030L640 1040L820 1060H480z" fill="#6d6240" filter="url(#b2)"/>
<ellipse cx="965" cy="1038" rx="26" ry="12" fill="#cfa24a" filter="url(#b4)"/>
<path d="M1060 1050L1300 1044L1500 1052V1058H1060z" fill="#8d7c4d" filter="url(#b2)"/>
<rect x="1520" y="1030" width="229" height="28" fill="#71653f" filter="url(#b4)"/>
<rect x="500" y="1024" width="1249" height="2" fill="#8d7e54"/>
<!-- windows -->
<path d="M9 1035l12-2v11H9zM23 1033l12-2v13H23zM9 1046h12v9l-12-2zM23 1046h12v11l-12-2z" fill="#fff"/>
<!-- app icon -->
<rect x="63" y="1029" width="29" height="32" rx="6" fill="#222"/><rect x="65" y="1031" width="25" height="30" rx="5" fill="#0f69ac"/><path d="M70 1035h10v15H70z" fill="#cfe6f8"/><path d="M72 1038h6M72 1041h6M72 1044h6" stroke="#0f69ac"/><circle cx="83" cy="1050" r="4.500" fill="#fff"/><circle cx="83" cy="1050" r="1.500" fill="#0f69ac"/>
<!-- folder -->
<path d="M125 1033h14l2 3h14v24h-31z" fill="#f4dc84" stroke="#c9a850"/><path d="M128 1033h3v2h-3z" fill="#2c2"/><path d="M136 1034h3v2h-3z" fill="#d22"/><path d="M145 1035h3v2h-3z" fill="#28d"/><path d="M129 1048h22v10h-22z" fill="#8cc4e8" stroke="#5a9ac0"/>
<!-- scissors -->
<ellipse cx="202" cy="1041" rx="15" ry="10" fill="#eee" stroke="#c22" stroke-width="2" transform="rotate(25 202 1041)"/><path d="M197 1033l14 20M212 1036l-12 14" stroke="#555" stroke-width="2"/><circle cx="209" cy="1053" r="3.500" fill="none" stroke="#1e78d0" stroke-width="2"/><circle cx="201" cy="1054" r="3.500" fill="none" stroke="#1e78d0" stroke-width="2"/>
<!-- ccleaner -->
<path d="M278 1034a14 14 0 1 0 0 20" fill="none" stroke="#d81e1e" stroke-width="7"/><path d="M267 1032l-6 14" stroke="#1e78d0" stroke-width="4"/><path d="M256 1043l10 5-5 9-13-3z" fill="#e8c898"/>
<!-- power -->
<rect x="312" y="1029" width="28" height="32" rx="6" fill="#4a1010" stroke="#777"/><rect x="314" y="1031" width="24" height="28" rx="5" fill="#a40f14"/><path d="M321 1040a6.500 6.500 0 1 0 10 0" fill="none" stroke="#fff" stroke-width="2"/><path d="M326 1036v7" stroke="#fff" stroke-width="2"/>
<!-- button 1 -->
<rect x="359.500" y="1025.500" width="58" height="34" fill="#8b8468" stroke="#a8a28a"/><circle cx="388" cy="1044" r="16" fill="#7b6fc8"/><g fill="none" stroke="#fff" stroke-width="2.200"><path d="M400 1036a15 15 0 0 0-23 14"/><path d="M400 1041a10 10 0 0 0-17 9"/><path d="M400 1046a5 5 0 0 0-10 4"/></g>
<!-- button 2 -->
<rect x="421.500" y="1025.500" width="58" height="34" fill="#aaa48e" stroke="#f4f4f0"/><rect x="434" y="1028" width="32" height="30" fill="#3a1c34"/><ellipse cx="450" cy="1040" rx="9" ry="8" fill="#8a3550" filter="url(#b2)"/>
<text x="448" y="1053" text-anchor="middle" font-family="Liberation Serif" font-weight="bold" font-size="27" fill="#12a4ee">C</text>
</svg>
</body></html>
